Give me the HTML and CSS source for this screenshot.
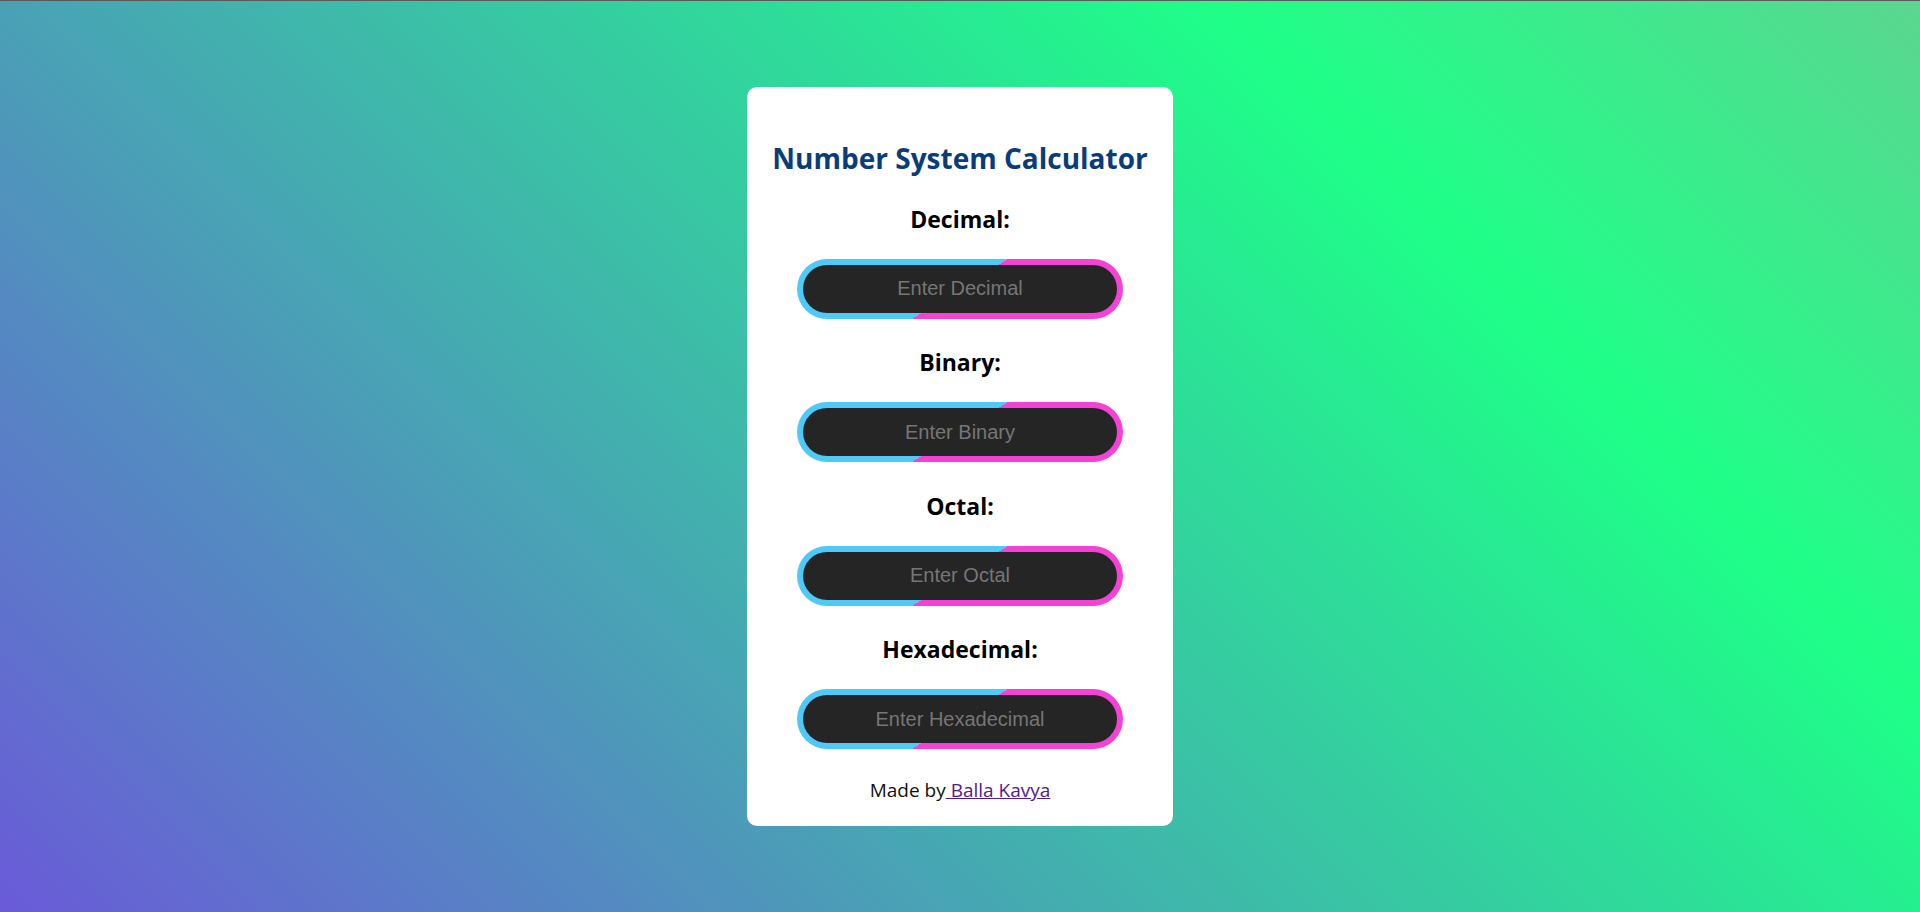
FILE: index.html
```html
<!DOCTYPE html>
<html lang="en">
<head>
<meta charset="UTF-8">
<title>Number System Calculator</title>
<link rel="stylesheet" href="styles.css">
</head>
<body>
<div class="card">
  <h1 class="title">Number System Calculator</h1>
  <div class="group">
    <label class="label" for="dec">Decimal:</label>
    <div class="field"><input class="input" id="dec" type="text" placeholder="Enter Decimal"></div>
  </div>
  <div class="group">
    <label class="label" for="bin">Binary:</label>
    <div class="field"><input class="input" id="bin" type="text" placeholder="Enter Binary"></div>
  </div>
  <div class="group">
    <label class="label" for="oct">Octal:</label>
    <div class="field"><input class="input" id="oct" type="text" placeholder="Enter Octal"></div>
  </div>
  <div class="group">
    <label class="label" for="hex">Hexadecimal:</label>
    <div class="field"><input class="input" id="hex" type="text" placeholder="Enter Hexadecimal"></div>
  </div>
  <p class="footer">Made by<a class="author" href="#"> Balla Kavya</a></p>
</div>
</body>
</html>
```
FILE: styles.css
```css
html {
  border-top: 1px solid #5a5a5a;
}
body {
  margin: 0;
  min-height: calc(100vh - 1px);
  display: flex;
  align-items: center;
  justify-content: center;
  background: linear-gradient(45deg, #6a5ad8 0%, #1eff88 75%, #5bd690 100%);
  font-family: "Open Sans", sans-serif;
}
.card {
  box-sizing: border-box;
  width: 426px;
  height: 739px;
  background: #fff;
  border-radius: 10px;
  padding: 51px 20px 24px;
  display: flex;
  flex-direction: column;
  align-items: center;
}
.title {
  margin: 0;
  font-size: 28px;
  line-height: 40px;
  font-weight: 700;
  color: #0b3c7a;
  white-space: nowrap;
}
.group {
  display: flex;
  flex-direction: column;
  align-items: center;
  margin-top: 26px;
}
.group + .group {
  margin-top: 28.6px;
}
.label {
  font-size: 23px;
  line-height: 30px;
  font-weight: 700;
  color: #000;
}
.field {
  margin-top: 24.9px;
  width: 326px;
  height: 60px;
  box-sizing: border-box;
  padding: 6px;
  border-radius: 30px;
  background: linear-gradient(148deg, #4fc9f8 50%, #f542d6 50%);
}
.input {
  display: block;
  box-sizing: border-box;
  width: 100%;
  height: 48px;
  padding-top: 1px;
  border: none;
  outline: none;
  border-radius: 24px;
  background: #252525;
  color: #fff;
  font-family: "Liberation Sans", Arial, sans-serif;
  font-size: 20px;
  text-align: center;
}
.input::placeholder {
  color: #767676;
}
.footer {
  margin: 29px 0 0;
  font-size: 19px;
  line-height: 24px;
  color: #111;
}
.author {
  color: #551a8b;
}
```
